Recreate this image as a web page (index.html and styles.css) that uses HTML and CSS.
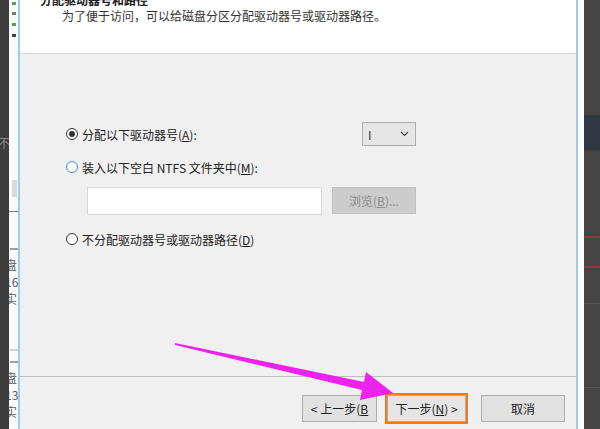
FILE: index.html
```html
<!DOCTYPE html>
<html lang="zh-CN">
<head>
    <meta charset="UTF-8">
    <meta name="viewport" content="width=device-width, initial-scale=1.0">
    <title>新建简单卷向导</title>
    <link rel="stylesheet" href="styles.css">
</head>
<body>
    <div class="screen">
        <div class="desk-left"><span class="ghost-char">不</span></div>

        <!-- window behind the wizard, only its right edge shows -->
        <div class="behind">
            <div class="tree-mark green"></div>
            <div class="tree-mark"></div>
            <div class="tree-mark green low"></div>
            <div class="tree-mark dark"></div>
            <div class="scroll-thumb"></div>
            <div class="rule"></div>
            <div class="disk-block">
                <div class="dash"></div>
                <span>盘</span><span>16</span><span>实</span>
            </div>
            <div class="disk-block second">
                <div class="dash light"></div>
                <div class="dash"></div>
                <span>盘</span><span>13</span><span>实</span>
            </div>
        </div>

        <div class="wizard">
            <div class="wizard-head">
                <div class="head-title">分配驱动器号和路径</div>
                <div class="head-desc">为了便于访问，可以给磁盘分区分配驱动器号或驱动器路径。</div>
            </div>

            <div class="wizard-body">
                <div class="options">
                    <div class="option-row first">
                        <span class="radio checked"></span>
                        <span class="label">分配以下驱动器号(<u>A</u>):</span>
                        <div class="drive-select">
                            <span>I</span>
                            <svg class="chevron" width="9" height="6" viewBox="0 0 9 6">
                                <path d="M1 1 L4.5 4.5 L8 1" fill="none" stroke="#444" stroke-width="1.2"/>
                            </svg>
                        </div>
                    </div>
                    <div class="option-row">
                        <span class="radio hover"></span>
                        <span class="label">装入以下空白 NTFS 文件夹中(<u>M</u>):</span>
                    </div>
                    <div class="folder-row">
                        <div class="path-box"></div>
                        <div class="browse-btn">浏览(<u>B</u>)...</div>
                    </div>
                    <div class="option-row last">
                        <span class="radio"></span>
                        <span class="label">不分配驱动器号或驱动器路径(<u>D</u>)</span>
                    </div>
                </div>
            </div>

            <div class="wizard-foot">
                <div class="btn prev">&lt; 上一步(<u>B</u></div>
                <div class="btn next">下一步(<u>N</u>) &gt;</div>
                <div class="btn cancel">取消</div>
            </div>
        </div>

        <div class="gap"></div>

        <div class="desk-right">
            <div class="band"></div>
            <div class="red-line one"></div>
            <div class="red-line two"></div>
            <div class="grey-line one"></div>
            <div class="grey-line two"></div>
        </div>

        <!-- pointer arrow drawn over the dialog -->
        <svg class="pointer" width="600" height="429" viewBox="0 0 600 429">
            <polygon points="175,343 364,382 366,372 393,393 360,400 362,390 175,345" fill="#ee22ee"/>
        </svg>
    </div>
</body>
</html>
```

FILE: styles.css
```css
* { box-sizing: border-box; }
body { margin: 0; font-family: "Noto Sans CJK SC", "Microsoft YaHei", sans-serif; font-size: 12px; color: #1e1e1e; }
u { text-decoration: underline; text-underline-offset: 1px; }

.screen { position: relative; display: flex; width: 600px; height: 429px; overflow: hidden; background: #fff; }

.desk-left { width: 9px; background: #3c3c3c; overflow: hidden; }
.ghost-char { display: block; margin: 134px 0 0 -2px; font-size: 12px; color: #8a8a8a; }

.behind { width: 9px; background: #fafafa; overflow: hidden; position: relative; }
.tree-mark { width: 4px; height: 3px; margin: 2px 0 7px 3px; background: #7a7a7a; }
.tree-mark.green { background: #5a9f5a; }
.tree-mark.low { margin-top: 8px; }
.tree-mark.dark { background: #444; margin-top: 8px; }
.scroll-thumb { width: 5px; height: 17px; margin: 143px 0 0 3px; background: #d9d9d9; }
.rule { height: 1px; margin-top: 14px; background: #7a7a7a; }
.disk-block { margin-top: 36px; display: flex; flex-direction: column; }
.disk-block.second { margin-top: 42px; }
.disk-block .dash { height: 2px; margin: 0 0 6px 1px; background: #a0a0a0; }
.disk-block .dash.light { background: #d2d2d2; margin-bottom: 10px; }
.disk-block span { font-size: 12px; line-height: 17px; color: #5e5e5e; margin-left: -4px; white-space: nowrap; }

.wizard { width: 560px; display: flex; flex-direction: column; background: #f0f0f0;
    border-left: 2px solid #9fc9ee; border-right: 2px solid #9fc9ee; }

.wizard-head { height: 54px; background: #fff; border-bottom: 1px solid #d5d5d5; padding-left: 20px; }
.head-title { margin-top: -8px; font-weight: bold; line-height: 16px; color: #222; }
.head-desc { margin-left: 22px; line-height: 16px; color: #333; }

.wizard-body { flex: 1; padding: 68px 0 0 46px; }
.options { width: 350px; display: flex; flex-direction: column; }
.option-row { display: flex; align-items: center; height: 20px; margin-top: 11px; }
.option-row.first { height: 24px; margin-top: 0; }
.option-row.last { margin-top: 14px; }
.label { margin-left: 4px; white-space: nowrap; color: #222; }

.radio { width: 12px; height: 12px; border: 1px solid #333; border-radius: 50%; background: #fff; position: relative; flex: none; }
.radio.checked::after { content: ""; position: absolute; left: 2px; top: 2px; width: 6px; height: 6px; border-radius: 50%; background: #333; }
.radio.hover { border-color: #3a8ee6; }

.drive-select { margin-left: auto; width: 54px; height: 24px; display: flex; align-items: center; justify-content: space-between;
    padding: 0 6px 0 5px; background: #e5e5e5; border: 1px solid #adadad; color: #333; }

.folder-row { display: flex; align-items: flex-start; margin: 10px 0 0 21px; }
.path-box { width: 235px; height: 28px; background: #fff; border: 1px solid #d9d9d9; }
.browse-btn { width: 84px; height: 27px; margin-left: 10px; display: flex; align-items: center; justify-content: center;
    background: #cccccc; border: 1px solid #c2c2c2; color: #8c8c8c; }

.wizard-foot { height: 53px; border-top: 1px solid #bdbdbd; display: flex; align-items: flex-start; justify-content: flex-end;
    padding: 18px 11px 0 0; }
.btn { height: 27px; display: flex; align-items: center; justify-content: center; white-space: nowrap;
    background: #e1e1e1; border: 1px solid #adadad; color: #222; }
.btn.prev { width: 75px; }
.btn.next { width: 79px; margin-left: 10px; background: #e5e5e5; outline: 2px solid #f07b1d; }
.btn.cancel { width: 84px; margin-left: 15px; }

.gap { width: 6px; background: #fff; }

.desk-right { flex: 1; background: #444; position: relative; }
.desk-right .band { height: 35px; margin-top: 115px; background: #2f3842; }
.desk-right .red-line { height: 2px; background: #8a3b3b; }
.desk-right .red-line.one { margin-top: 86px; }
.desk-right .red-line.two { margin-top: 28px; }
.desk-right .grey-line { height: 1px; background: #555; }
.desk-right .grey-line.one { margin-top: 35px; }
.desk-right .grey-line.two { margin-top: 83px; }

.pointer { position: absolute; left: 0; top: 0; pointer-events: none; }
```
